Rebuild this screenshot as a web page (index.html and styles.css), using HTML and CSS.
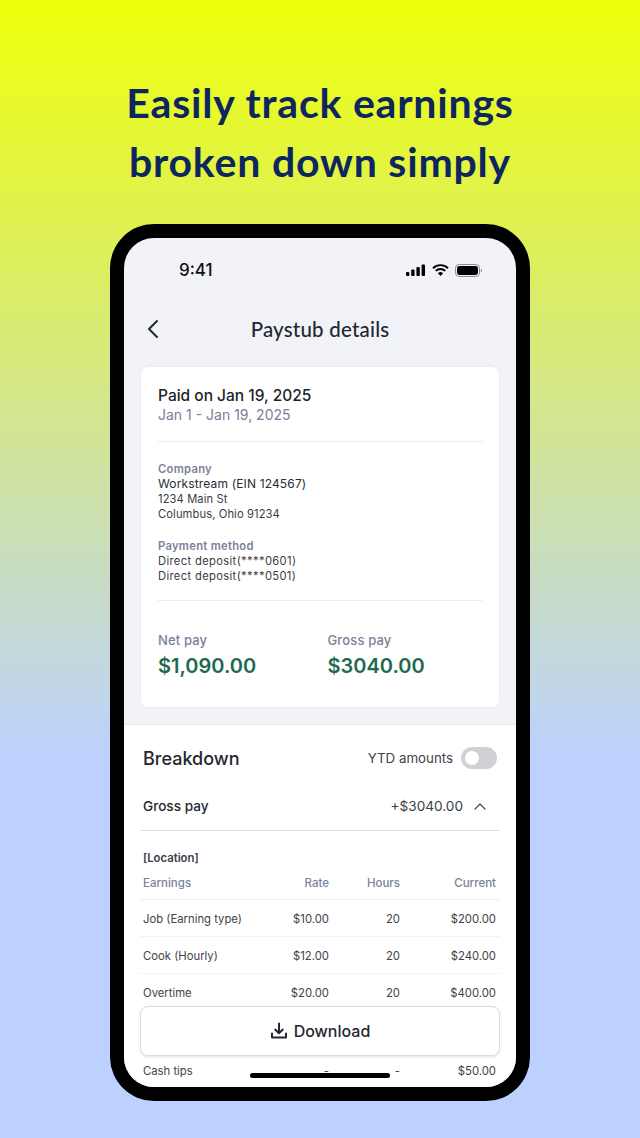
FILE: index.html
```html
<!DOCTYPE html>
<html lang="en">
<head>
<meta charset="utf-8">
<title>Paystub details</title>
<link rel="stylesheet" href="styles.css">
</head>
<body>
<main class="poster">
  <h1 class="headline">Easily track earnings<br>broken down simply</h1>
  <div class="phone">
    <div class="screen">
      <div class="status">
        <span class="time">9:41</span>
        <span class="status-icons">
          <svg width="20" height="12" viewBox="0 0 20 12"><rect x="0" y="8" width="3.4" height="4" rx="1"/><rect x="5.2" y="5.6" width="3.4" height="6.4" rx="1"/><rect x="10.4" y="3" width="3.4" height="9" rx="1"/><rect x="15.6" y="0.4" width="3.4" height="11.6" rx="1"/></svg>
          <svg width="17" height="12" viewBox="0 0 17 12"><path d="M1 4.2a10.8 10.8 0 0 1 15 0" fill="none" stroke="#000" stroke-width="1.9"/><path d="M3.7 6.900a7 7 0 0 1 9.600 0" fill="none" stroke="#000" stroke-width="1.9"/><path d="M8.500 12 5.900 9.300a3.700 3.700 0 0 1 5.200 0z"/></svg>
          <svg width="27" height="13" viewBox="0 0 27 13"><rect x="0.5" y="0.5" width="24" height="12" rx="3.6" fill="none" stroke="#8e8e92"/><rect x="2" y="2" width="21" height="9" rx="2.4"/><path d="M25.800 4.700c.8.300 1.200 1 1.200 1.800s-.4 1.500-1.200 1.800z" fill="#8e8e92"/></svg>
        </span>
      </div>
      <header class="nav">
        <svg class="back" width="14" height="20" viewBox="0 0 14 20"><path d="M11 2 3 10l8 8" fill="none" stroke="#24272e" stroke-width="2" stroke-linecap="round" stroke-linejoin="round"/></svg>
        <span class="nav-title">Paystub details</span>
      </header>
      <section class="card">
        <div class="paid">
          <div class="paid-date">Paid on Jan 19, 2025</div>
          <div class="paid-range">Jan 1 - Jan 19, 2025</div>
        </div>
        <div class="info info-company">
          <div class="label">Company</div>
          <div class="company-name">Workstream (EIN 124567)</div>
          <div>1234 Main St</div>
          <div>Columbus, Ohio 91234</div>
        </div>
        <div class="info info-payment">
          <div class="label">Payment method</div>
          <div class="deposit">Direct deposit(****0601)</div>
          <div class="deposit">Direct deposit(****0501)</div>
        </div>
        <div class="totals">
          <div class="total total-net">
            <div class="total-label">Net pay</div>
            <div class="total-value">$1,090.00</div>
          </div>
          <div class="total">
            <div class="total-label">Gross pay</div>
            <div class="total-value">$3040.00</div>
          </div>
        </div>
      </section>
      <section class="sheet">
        <div class="sheet-head">
          <h2 class="sheet-title">Breakdown</h2>
          <div class="ytd">
            <span>YTD amounts</span>
            <span class="toggle"><span class="knob"></span></span>
          </div>
        </div>
        <div class="gross">
          <span class="gross-label">Gross pay</span>
          <span class="gross-right">
            <span>+$3040.00</span>
            <svg width="14" height="9" viewBox="0 0 14 9"><path d="M2 7 7 2l5 5" fill="none" stroke="#4a4d55" stroke-width="1.3" stroke-linecap="round" stroke-linejoin="round"/></svg>
          </span>
        </div>
        <div class="location">[Location]</div>
        <div class="row row-head"><span>Earnings</span><span>Rate</span><span>Hours</span><span>Current</span></div>
        <div class="row"><span>Job (Earning type)</span><span>$10.00</span><span>20</span><span>$200.00</span></div>
        <div class="row"><span>Cook (Hourly)</span><span>$12.00</span><span>20</span><span>$240.00</span></div>
        <div class="row"><span>Overtime</span><span>$20.00</span><span>20</span><span>$400.00</span></div>
        <div class="row row-last"><span>Cash tips</span><span>-</span><span>-</span><span>$50.00</span></div>
      </section>
      <button class="download">
        <svg width="18" height="18" viewBox="0 0 18 18"><path d="M9 1.500v9.500M5.200 7.600 9 11.200l3.800-3.600M2 11.500v4h14v-4" fill="none" stroke="#24272e" stroke-width="2" stroke-linecap="round" stroke-linejoin="round"/></svg>
        <span>Download</span>
      </button>
      <div class="home"></div>
    </div>
  </div>
</main>
</body>
</html>
```
FILE: styles.css
```css
* { box-sizing: border-box; }
html, body { margin: 0; padding: 0; }
body { width: 640px; height: 1138px; overflow: hidden; font-family: Inter, "Liberation Sans", sans-serif; }
.poster {
  width: 640px; height: 1138px; overflow: hidden;
  display: flex; flex-direction: column; align-items: center;
  background: linear-gradient(180deg, #eeff0a 0%, #bcd1ff 67%, #bcd1ff 100%);
}
.headline {
  margin: 73px 0 0; height: 151px;
  font: 700 41px/59px Lato, "Open Sans", sans-serif;
  color: #0d2660; text-align: center; letter-spacing: 0.8px;
}
.phone {
  width: 420px; height: 877px; padding: 14px;
  background: #000; border-radius: 44px; flex: none;
}
.screen {
  position: relative; width: 392px; height: 849px;
  background: #f2f3f8; border-radius: 30px; overflow: hidden;
}
.status {
  height: 64px; padding: 0 34px 0 55px;
  display: flex; justify-content: space-between; align-items: center;
}
.time { font: 500 17px/20px Inter, sans-serif; color: #111; }
.status-icons { display: flex; align-items: center; gap: 6px; }
.nav {
  position: relative; height: 54px; margin-bottom: 11px;
  display: flex; align-items: center; justify-content: center;
}
.back { position: absolute; left: 22px; top: 17px; }
.nav-title { font: 500 20.5px/24px Lato, "Open Sans", sans-serif; color: #24272e; letter-spacing: 0.2px; }
.card {
  margin: 0 17px; height: 340px; padding: 19px 17px 0;
  background: #fff; border-radius: 8px;
  box-shadow: 0 0 4px rgba(40, 50, 80, 0.04);
}
.paid { height: 56px; border-bottom: 1px solid #ebecef; margin-right: -1px; }
.paid-date { font: 500 15.500px/20px Inter, sans-serif; color: #1c1f26; }
.paid-range { font: 400 14px/18px Inter, sans-serif; color: #7b8099; }
.info { font: 400 11.200px/15px Inter, sans-serif; color: #3a3d45; letter-spacing: 0.1px; }
.info-company { margin-top: 20px; }
.info-payment { margin-top: 17px; }
.label { font-weight: 600; color: #7b8099; letter-spacing: 0.3px; }
.company-name { margin: -1px 0 1px; font-size: 12px; letter-spacing: 0.15px; color: #2a2d34; }
.deposit { letter-spacing: 0.35px; }
.totals {
  margin-top: 16px; padding-top: 30px;
  border-top: 1px solid #ebecef; display: flex;
}
.total-net { width: 169.500px; }
.total-label { font: 500 13px/18px Inter, sans-serif; color: #7b8099; letter-spacing: 0.15px; }
.total-value { margin-top: 4px; font: 600 20px/26px Inter, sans-serif; color: #1f6a4e; }
.sheet {
  margin-top: 17px; height: 400px; padding: 0 16px;
  background: #fff; border-top: 1px solid #e9eaee;
}
.sheet-head {
  height: 66px; padding: 2px 3px 0;
  display: flex; justify-content: space-between; align-items: center;
}
.sheet-title { margin: 0; font: 500 18px/24px Inter, sans-serif; color: #24272e; }
.ytd { display: flex; align-items: center; gap: 8px; font: 400 13.300px/18px Inter, sans-serif; color: #3f424a; margin-top: -2px; }
.toggle { width: 36px; height: 22px; padding: 4px; border-radius: 11px; background: #d0d1d4; display: block; }
.knob { display: block; width: 14px; height: 14px; border-radius: 50%; background: #fff; }
.gross {
  height: 40px; padding: 0 3px 9px;
  display: flex; justify-content: space-between; align-items: center;
  border-bottom: 1px solid #dfe0e4;
  font: 400 13.600px/18px Inter, sans-serif; color: #3a3d45;
}
.gross-label { font-weight: 500; color: #24272e; }
.gross-right { display: flex; align-items: center; gap: 10px; padding-right: 10px; }
.location { margin-top: 20px; padding-left: 3px; font: 600 11.300px/14px Inter, sans-serif; color: #3a3d45; }
.row {
  height: 37px; padding: 2px 4px 0 3px;
  display: grid; grid-template-columns: 1fr 60px 71px 96px; align-items: center;
  border-bottom: 1px solid #f3f3f5;
  font: 400 11.300px/15px Inter, sans-serif; color: #3f424a;
}
.row span:not(:first-child) { text-align: right; }
.row-head { height: 35px; color: #7b8099; font-weight: 500; font-size: 11.500px; border-bottom-color: #f0f1f3; }
.row-last { margin-top: 41px; border-bottom: 0; }
.download {
  position: absolute; left: 16px; top: 768px;
  width: 360px; height: 50px;
  display: flex; align-items: center; justify-content: center; gap: 6px;
  background: #fff; border: 1px solid #dcdde1; border-radius: 8px;
  box-shadow: 0 1px 3px rgba(40, 45, 60, 0.14);
  font: 500 16px/20px Inter, sans-serif; color: #24272e;
}
.home {
  position: absolute; left: 126px; top: 835px;
  width: 140px; height: 5px; border-radius: 3px; background: #000;
}
```
